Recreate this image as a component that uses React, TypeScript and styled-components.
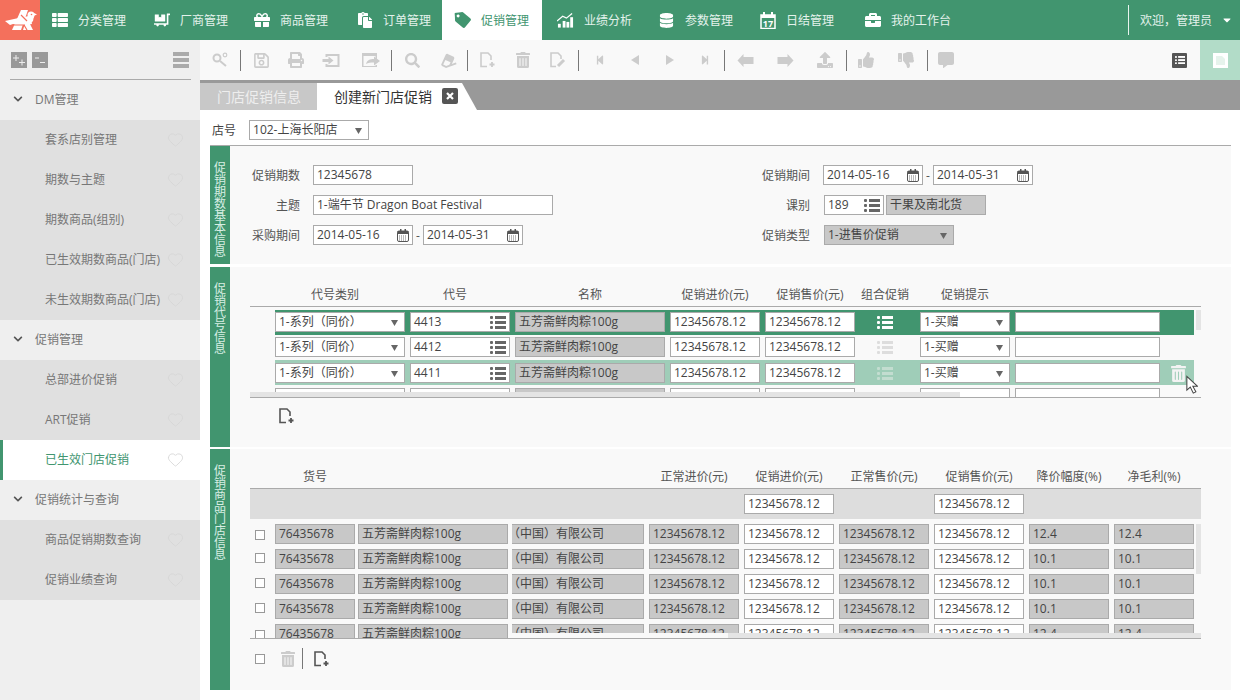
import React from 'react';
import styled, { createGlobalStyle } from 'styled-components';
import { Heart } from 'lucide-react';
import {
  FaThList, FaDollyFlatbed, FaGift, FaPaste, FaTag, FaDatabase, FaBriefcase, FaChevronDown, FaRegSave, FaPrint,
  FaSearch, FaEraser, FaTrashAlt, FaStepBackward, FaStepForward, FaCaretDown, FaUpload, FaThumbsUp,
  FaThumbsDown, FaCommentAlt,
} from 'react-icons/fa';

const Global = createGlobalStyle`
  html, body { margin: 0; padding: 0; background: #fff; }
  body { font-family: "Open Sans", "Noto Sans CJK SC", sans-serif; font-size: 12px; color: #555; overflow: hidden; }
  * { box-sizing: border-box; }
`;

const Page = styled.div`width: 1240px; height: 700px; display: flex; flex-direction: column; overflow: hidden;`;
const Header = styled.header`height: 40px; background: #41956f; display: flex; align-items: stretch; flex: none;`;
const Logo = styled.div`width: 40px; background: #f4705c; flex: none; display: flex;`;
const Nav = styled.nav`display: flex; flex: 1; padding-left: 11px;`;
const NavItem = styled.div<{ $w: number; $pl?: number; $active?: boolean }>`
  width: ${p => p.$w}px; display: flex; align-items: center; gap: 10px; padding-left: ${p => p.$pl ?? 0}px; flex: none;
  background: ${p => p.$active ? '#fff' : 'transparent'};
  color: ${p => p.$active ? '#41956f' : '#e4f2ec'};
`;
const NavIcon = styled.span<{ $active?: boolean }>`width: 17px; display: flex; justify-content: center; flex: none; color: ${p => p.$active ? '#41956f' : '#fff'};`;
const User = styled.div`width: 112px; margin: 5px 0; border-left: 1px solid #e8f4ee; display: flex; align-items: center; padding-left: 11px; gap: 9px; color: #e4f2ec; flex: none;`;

const Body = styled.div`flex: 1; display: flex; min-height: 0;`;
const Side = styled.aside`width: 200px; flex: none; background: #efefef;`;
const SideTop = styled.div`height: 40px; margin: 0 9px 0 10px; border-bottom: 1px solid #aaa; display: flex; align-items: center; justify-content: space-between; padding: 0 2px 0 1px;`;
const SideBtns = styled.div`display: flex; gap: 5px;`;
const SideBtn = styled.span`width: 16px; height: 16px; background: #999; display: flex;`;
const Burger = styled.div`width: 16px; height: 16px; display: flex; flex-direction: column; justify-content: space-between; i { height: 4px; background: #aaa; display: block; }`;
const Group = styled.div`height: 40px; display: flex; align-items: center; padding: 0 0 2px 13px; gap: 12px; color: #777; svg { color: #555; }`;
const Item = styled.div<{ $active?: boolean }>`
  height: 40px; display: flex; align-items: center; justify-content: space-between; padding: 0 16px 2px ${p => p.$active ? 42 : 45}px;
  background: ${p => p.$active ? '#fff' : '#e0e0e0'}; color: ${p => p.$active ? '#41956f' : '#777'};
  border-left: ${p => p.$active ? '3px solid #41956f' : 'none'};
  svg { color: #d6d6d6; flex: none; }
`;
const Main = styled.main`flex: 1; display: flex; flex-direction: column; min-width: 0;`;
const Toolbar = styled.div`height: 40px; background: #f9f9f9; display: flex; align-items: center; color: #ccc; flex: none;`;
const Tool = styled.span<{ $w?: number; $ml?: number }>`width: ${p => p.$w ?? 35}px; margin-left: ${p => p.$ml ?? 0}px; display: flex; justify-content: center; align-items: center; flex: none;`;
const Sep = styled.span<{ $ml?: number }>`width: 1px; height: 21px; background: #777; flex: none; margin-left: ${p => p.$ml ?? 0}px;`;
const Spacer = styled.div`flex: 1;`;
const DarkSquare = styled.span`width: 15px; height: 15px; background: #555; border-radius: 1px; display: flex; align-items: center; justify-content: center; margin-right: 13px;`;
const Panel = styled.div`width: 40px; height: 40px; background: #b2dcc8; display: flex; align-items: center; justify-content: center;`;
const Tabs = styled.div`height: 30px; background: #999; display: flex; align-items: flex-end; flex: none;`;
const TabOff = styled.div`width: 117px; height: 27px; background: #c8c8c8; color: #eee; font-size: 14px; display: flex; align-items: center; padding: 0 0 2px 17px;`;
const TabOn = styled.div`width: 160px; height: 27px; background: #fff; color: #333; font-size: 14px; display: flex; align-items: center; gap: 10px; padding: 0 0 2px 17px; clip-path: polygon(0 0, 145px 0, 100% 100%, 0 100%);`;
const Close = styled.span`width: 16px; height: 16px; background: #555; border-radius: 2px; display: flex; align-items: center; justify-content: center;`;
const Content = styled.div`flex: 1; padding: 0 9px 0 10px; min-height: 0;`;
const StoreRow = styled.div`height: 36px; border-bottom: 1px solid #aaa; display: flex; align-items: center; gap: 13px; padding: 10px 2px 5px; color: #444;`;
const Section = styled.section<{ $h: number; $mt?: number }>`height: ${p => p.$h}px; margin-top: ${p => p.$mt ?? 0}px; display: flex; background: #f9f9f9;`;
const Strip = styled.div`width: 20px; flex: none; background: #41956f; color: #d8eee4; font-family: "Noto Sans CJK SC", sans-serif; font-size: 12px; line-height: 12px; padding: 15px 4px 0; word-break: break-all;`;
const SecBody = styled.div`flex: 1; min-width: 0; position: relative;`;
const FormGrid = styled.div`display: grid; grid-template-columns: 520px auto; padding-top: 19px; row-gap: 10px; grid-auto-rows: 20px;`;
const FormRow = styled.div`display: flex; align-items: center;`;
const Label = styled.label<{ $w: number }>`width: ${p => p.$w}px; text-align: right; margin-right: 13px; color: #555; flex: none;`;
const Field = styled.div<{ $w: number; $gray?: boolean; $ml?: number; $mr?: number; $open?: boolean }>`
  width: ${p => p.$w}px; height: 20px; flex: none; margin-left: ${p => p.$ml ?? 0}px; margin-right: ${p => p.$mr ?? 0}px;
  border: 1px solid #aaa; border-left: ${p => p.$open ? 'none' : '1px solid #aaa'};
  background: ${p => p.$gray ? '#c8c8c8' : '#fff'}; color: #444;
  display: flex; align-items: center; justify-content: space-between; padding: 0 3px 0 ${p => p.$open ? 0 : 3}px; line-height: 18px; white-space: nowrap; overflow: hidden;
  svg { flex: none; color: #666; }
`;
const Scrolled = styled.span`margin-left: -4px;`;
const Dash = styled.span`width: 10px; text-align: center; color: #555; flex: none;`;
const HeadRow = styled.div<{ $t: number; $l: number }>`display: flex; gap: 5px; height: 18px; margin-top: ${p => p.$t}px; padding-left: ${p => p.$l}px; margin-left: 20px; margin-right: 30px; align-items: center; color: #555;`;
const HeadCell = styled.div<{ $w: number; $pr?: number }>`width: ${p => p.$w}px; flex: none; text-align: center; padding-right: ${p => p.$pr ?? 0}px; white-space: nowrap;`;
const ListBox = styled.div<{ $h: number }>`margin: 0 30px 0 20px; height: ${p => p.$h}px; overflow: hidden; border-bottom: 1px solid #aaa; position: relative;`;
const CodeList = styled(ListBox)`margin-top: 3px; border-top: 1px solid #aaa; padding-top: 3px;`;
const GoodsList = styled(ListBox)`padding-top: 5px;`;
const CodeRow = styled.div<{ $tone?: 'on' | 'hover' }>`
  height: 25px; margin: 0 7px 0 25px; padding-top: 2px; display: flex; gap: 5px; align-items: flex-start;
  background: ${p => p.$tone === 'on' ? '#41956f' : p.$tone === 'hover' ? '#9fcdb8' : 'transparent'};
  &:nth-child(n+3) { padding-top: 3px; }
`;
const GroupIcon = styled.div<{ $c: string }>`width: 50px; height: 20px; flex: none; margin-right: 5px; display: flex; align-items: center; justify-content: center; color: ${p => p.$c};`;
const RowTrash = styled.div`width: 33px; height: 20px; padding-left: 3px; display: flex; align-items: center; justify-content: center; color: #f3f3f3; margin-left: -5px; flex: none;`;
const HThumb = styled.div`position: absolute; left: 0; bottom: 0; width: 710px; height: 5px; background: #e4e4e4;`;
const VThumb = styled.div<{ $t: number; $h: number }>`position: absolute; right: 0; top: ${p => p.$t}px; width: 5px; height: ${p => p.$h}px; background: #e4e4e4;`;
const PaneTrack = styled.div`position: absolute; left: 262px; right: 0; bottom: 0; height: 5px; background: #f9f9f9; padding-left: 216px;`;
const PaneThumb = styled.div`height: 5px; background: #e4e4e4;`;
const CursorMark = styled.span`position: absolute; left: 956px; top: 108px; line-height: 0;`;
const Foot = styled.div<{ $t: number; $l: number }>`display: flex; align-items: center; margin: ${p => p.$t}px 0 0 ${p => p.$l}px; color: #666;`;
const QuickBar = styled.div`margin: 3px 30px 0 20px; height: 31px; border-top: 1px solid #aaa; background: #ddd; display: flex; padding: 5px 0 0 494px; gap: 100px;`;
const GoodsRow = styled.div`height: 25px; display: flex; align-items: flex-start; padding-left: 5px;`;
const Check = styled.span<{ $mt: number }>`width: 10px; height: 10px; border: 1px solid #999; background: #fff; margin-top: ${p => p.$mt}px; margin-right: 10px; flex: none; display: block;`;
const GoodsCells = styled.div`display: flex; gap: 5px;`;
const FootCheck = styled.span`width: 10px; height: 10px; border: 1px solid #999; background: #fff; display: block; flex: none;`;
const FootSep = styled.span`width: 1px; height: 21px; background: #777; margin: 0 11px 0 2px; flex: none;`;
const Tri = styled.svg`margin-right: 3px;`;

const Caret = () => <Tri width="7" height="7" viewBox="0 0 7 7"><path d="M0 1h7L3.500 7z" fill="#666" /></Tri>;
const BirdLogo = () => (
  <svg width="40" height="40" viewBox="0 0 40 40">
    <path d="M21 10h7l-7 20h-9z" fill="#fff" />
    <path d="M5 21l18-4 7-1 2 8-8 1-11-1-3 1z" fill="#fff" />
    <path d="M27 17l-4 13h10l-3-6 3-3 1-5-3-2z" fill="#fff" />
    <circle cx="31" cy="15" r="3.500" fill="#fff" />
    <path d="M33 12.500l4 2-3.500 1.500z" fill="#fff" />
    <path d="M21 15l6 6M14 25h11M24 25l3 5" stroke="#f4705c" strokeWidth="1.200" fill="none" />
    <circle cx="31.500" cy="14.500" r="0.800" fill="#f4705c" />
  </svg>
);
const ListIcon = ({ size = 16, color = 'currentColor' }: { size?: number; color?: string }) => (
  <svg width={size} height={size * 0.8125} viewBox="0 0 16 13" fill={color}>
    <rect x="0" y="0" width="3" height="3" rx="1" /><rect x="5" y="0" width="11" height="3" />
    <rect x="0" y="5" width="3" height="3" rx="1" /><rect x="5" y="5" width="11" height="3" />
    <rect x="0" y="10" width="3" height="3" rx="1" /><rect x="5" y="10" width="11" height="3" />
  </svg>
);
const ChartIcon = () => (
  <svg width="18" height="15" viewBox="0 0 18 15" fill="#fff">
    <rect x="1" y="11" width="3" height="4" /><rect x="6" y="8" width="3" height="7" /><rect x="10" y="9" width="3" height="6" /><rect x="14" y="4" width="3" height="11" />
    <path d="M0 8 L6 3 L10 5 L16 0" stroke="#fff" strokeWidth="1.300" fill="none" />
  </svg>
);
const CalIcon = () => (
  <svg width="16" height="17" viewBox="0 0 16 17">
    <path d="M1 3h14v13.500H1z" fill="none" stroke="#fff" strokeWidth="1.500" />
    <rect x="1" y="3" width="14" height="3" fill="#fff" /><rect x="3" y="0" width="2" height="4" fill="#fff" /><rect x="11" y="0" width="2" height="4" fill="#fff" />
    <text x="8" y="15" fontSize="9" fontWeight="700" fill="#fff" textAnchor="middle" fontFamily="Open Sans">17</text>
  </svg>
);
const SmallCal = () => (
  <svg width="12" height="13" viewBox="0 0 12 13">
    <rect x="0.500" y="2" width="11" height="10.500" rx="1.500" fill="none" stroke="#555" />
    <rect x="0.500" y="2" width="11" height="3" fill="#555" /><rect x="3" y="0" width="1.500" height="3" fill="#555" /><rect x="7.500" y="0" width="1.500" height="3" fill="#555" />
    <path d="M2 7h8M2 9h8M2 11h8" stroke="#777" strokeDasharray="1 1" />
  </svg>
);
const PlusMark = () => (
  <svg width="16" height="16" viewBox="0 0 16 16" stroke="#eee" strokeWidth="1" fill="none"><path d="M2 6h6M5 3v6M8 10.500h6M11 7.500v6" /></svg>
);
const MinusMark = () => (
  <svg width="16" height="16" viewBox="0 0 16 16" stroke="#eee" strokeWidth="1" fill="none"><path d="M3 6h4M8 10.500h5" /></svg>
);
const CloseMark = () => (
  <svg width="8" height="8" viewBox="0 0 8 8" stroke="#fff" strokeWidth="2.200"><path d="M1 1l6 6M7 1l-6 6" /></svg>
);
const FileAdd = ({ c = '#555' }: { c?: string }) => (
  <svg width="16" height="16" viewBox="0 0 16 16" fill="none" stroke={c} strokeWidth="1.600">
    <path d="M7 14.500H1V1h7l3 3v4" /><path d="M12 10v5M9.500 12.500h5" strokeWidth="1.800" />
  </svg>
);
const FileEdit = () => (
  <svg width="16" height="16" viewBox="0 0 16 16" fill="none" stroke="#ccc" strokeWidth="1.600">
    <path d="M6 14.500H1V1h7l3 3v3" /><path d="M8 14l6-6" strokeWidth="3" />
  </svg>
);
const KeySearch = () => (
  <svg width="16" height="16" viewBox="0 0 16 16" fill="none" stroke="#ccc" strokeWidth="2">
    <circle cx="5" cy="6" r="3.500" /><path d="M8 9l6 5" /><circle cx="13" cy="3" r="1.800" strokeWidth="1.200" />
  </svg>
);
const ExportIco = () => (
  <svg width="19" height="15" viewBox="0 0 18 15" fill="#ccc">
    <path d="M3 1h14v13H3v-3h2v1h10V3H5v1H3z" /><path d="M0 6h6V3.500L11 7.500 6 11.500V9H0z" />
  </svg>
);
const ShareIco = () => (
  <svg width="19" height="15" viewBox="0 0 19 15" fill="#ccc">
    <path d="M0 0h15v6h-1.500V3H1.500v10h12v-1H15v2H0z" /><path d="M4 11c1-4 4-5 8-5V3.500L18 8l-6 4.500V9.500c-3 0-6 0-8 1.500z" />
  </svg>
);
const FatArrow = ({ flip }: { flip?: boolean }) => (
  <svg width="17" height="13" viewBox="0 0 16 13" fill="#ccc" style={flip ? { transform: 'scaleX(-1)' } : undefined}>
    <path d="M0 6.500L6 0v3h10v7H6v3z" />
  </svg>
);
const StepTri = ({ flip }: { flip?: boolean }) => (
  <svg width="8" height="10" viewBox="0 0 8 10" fill="#ccc" style={flip ? { transform: 'scaleX(-1)' } : undefined}><path d="M0 5l8-5v10z" /></svg>
);
const Arrow = () => (
  <svg width="12" height="20" viewBox="0 0 14 22">
    <path d="M1 1v16l4-3.500 3.500 7 3-1.500-3.500-6.500h5.500z" fill="#fff" stroke="#444" strokeWidth="1.200" />
  </svg>
);
const PageIco = () => (
  <svg width="15" height="15" viewBox="0 0 15 15"><rect width="15" height="15" fill="#fff" /><path d="M3 3h6l3 3v6H3z" fill="#e6f3ec" /></svg>
);

const nav: { t: string; ic: React.ReactNode; w: number; pl?: number; a?: boolean }[] = [
  { t: '分类管理', ic: <FaThList size={16} />, w: 102 },
  { t: '厂商管理', ic: <FaDollyFlatbed size={16} style={{ transform: 'scaleX(-1)' }} />, w: 100 },
  { t: '商品管理', ic: <FaGift size={16} />, w: 103 },
  { t: '订单管理', ic: <FaPaste size={16} />, w: 86 },
  { t: '促销管理', ic: <FaTag size={16} style={{ transform: 'rotate(-5deg)' }} />, w: 100, pl: 12, a: true },
  { t: '业绩分析', ic: <ChartIcon />, w: 116, pl: 15 },
  { t: '参数管理', ic: <FaDatabase size={15} />, w: 101 },
  { t: '日结管理', ic: <CalIcon />, w: 105 },
  { t: '我的工作台', ic: <FaBriefcase size={16} />, w: 170 },
];

const menu: { g: string; items: string[] }[] = [
  { g: 'DM管理', items: ['套系店别管理', '期数与主题', '期数商品(组别)', '已生效期数商品(门店)', '未生效期数商品(门店)'] },
  { g: '促销管理', items: ['总部进价促销', 'ART促销', '已生效门店促销'] },
  { g: '促销统计与查询', items: ['商品促销期数查询', '促销业绩查询'] },
];

const codeHead: [string, number, number?][] = [
  ['代号类别', 130, 10], ['代号', 100, 10], ['名称', 150], ['促销进价(元)', 90], ['促销售价(元)', 90], ['组合促销', 50], ['', 0], ['促销提示', 90],
];
const codeRows: { code: string; tone?: 'on' | 'hover'; iconColor: string; trash?: boolean }[] = [
  { code: '4413', tone: 'on', iconColor: '#fff' },
  { code: '4412', iconColor: '#ddd' },
  { code: '4411', tone: 'hover', iconColor: '#c3ddd0', trash: true },
];
const goodsHead: [string, number][] = [
  ['货号', 80], ['', 147], ['', 132], ['正常进价(元)', 90], ['促销进价(元)', 90], ['正常售价(元)', 90], ['促销售价(元)', 90], ['降价幅度(%)', 80], ['净毛利(%)', 80],
];
const goods = ['12.4', '10.1', '10.1', '10.1', '12.4'];

export default function App() {
  return (
    <Page>
      <Global />
      <Header>
        <Logo><BirdLogo /></Logo>
        <Nav>
          {nav.map(n => (
            <NavItem key={n.t} $w={n.w} $pl={n.pl} $active={n.a}>
              <NavIcon $active={n.a}>{n.ic}</NavIcon><span>{n.t}</span>
            </NavItem>
          ))}
        </Nav>
        <User>欢迎，管理员<FaCaretDown size={12} color="#fff" /></User>
      </Header>
      <Body>
        <Side>
          <SideTop>
            <SideBtns><SideBtn><PlusMark /></SideBtn><SideBtn><MinusMark /></SideBtn></SideBtns>
            <Burger><i /><i /><i /></Burger>
          </SideTop>
          {menu.map(m => (
            <React.Fragment key={m.g}>
              <Group><FaChevronDown size={10} /><span>{m.g}</span></Group>
              {m.items.map(i => (
                <Item key={i} $active={i === '已生效门店促销'}>
                  <span>{i}</span><Heart size={17} strokeWidth={1.200} />
                </Item>
              ))}
            </React.Fragment>
          ))}
        </Side>
        <Main>
          <Toolbar>
            <Tool $w={40}><KeySearch /></Tool><Sep />
            <Tool $w={40}><FaRegSave size={17} /></Tool><Tool $w={30}><FaPrint size={16} /></Tool><Tool $w={41}><ExportIco /></Tool><Tool $w={39}><ShareIco /></Tool><Sep />
            <Tool $w={40}><FaSearch size={15} /></Tool><Tool $w={31}><FaEraser size={15} style={{ transform: 'rotate(-20deg)' }} /></Tool><Sep $ml={4} />
            <Tool $w={39}><FileAdd c="#ccc" /></Tool><Tool $w={31}><FaTrashAlt size={16} /></Tool><Tool $w={40}><FileEdit /></Tool><Sep />
            <Tool $w={41}><FaStepBackward size={10} /></Tool><Tool $w={29}><StepTri /></Tool><Tool $w={41}><StepTri flip /></Tool><Tool $w={29}><FaStepForward size={10} /></Tool><Sep $ml={5} />
            <Tool $w={41}><FatArrow /></Tool><Tool $w={38}><FatArrow flip /></Tool><Tool $w={42}><FaUpload size={16} /></Tool><Sep />
            <Tool $w={37}><FaThumbsUp size={16} /></Tool><Tool $w={43}><FaThumbsDown size={16} /></Tool><Sep />
            <Tool $w={36}><FaCommentAlt size={16} /></Tool>
            <Spacer />
            <DarkSquare><ListIcon size={10} color="#fff" /></DarkSquare>
            <Panel><PageIco /></Panel>
          </Toolbar>
          <Tabs>
            <TabOff>门店促销信息</TabOff>
            <TabOn>创建新门店促销<Close><CloseMark /></Close></TabOn>
          </Tabs>
          <Content>
            <StoreRow>店号<Field $w={120}>102-上海长阳店<Caret /></Field></StoreRow>
            <Section $h={118}>
              <Strip>促销期数基本信息</Strip>
              <SecBody>
                <FormGrid>
                  <FormRow><Label $w={70}>促销期数</Label><Field $w={100}>12345678</Field></FormRow>
                  <FormRow>
                    <Label $w={60}>促销期间</Label>
                    <Field $w={100}>2014-05-16<SmallCal /></Field><Dash>-</Dash><Field $w={100}>2014-05-31<SmallCal /></Field>
                  </FormRow>
                  <FormRow><Label $w={70}>主题</Label><Field $w={240}>1-端午节 Dragon Boat Festival</Field></FormRow>
                  <FormRow>
                    <Label $w={60}>课别</Label>
                    <Field $w={60} $ml={1} $mr={2}>189<ListIcon /></Field><Field $w={100} $gray>干果及南北货</Field>
                  </FormRow>
                  <FormRow>
                    <Label $w={70}>采购期间</Label>
                    <Field $w={100}>2014-05-16<SmallCal /></Field><Dash>-</Dash><Field $w={100}>2014-05-31<SmallCal /></Field>
                  </FormRow>
                  <FormRow>
                    <Label $w={60}>促销类型</Label>
                    <Field $w={130} $gray $ml={1}>1-进售价促销<Caret /></Field>
                  </FormRow>
                </FormGrid>
              </SecBody>
            </Section>
            <Section $h={180} $mt={3}>
              <Strip>促销代号信息</Strip>
              <SecBody>
                <HeadRow $t={18} $l={25}>
                  {codeHead.map(([t, w, pr], i) => <HeadCell key={i} $w={w} $pr={pr}>{t}</HeadCell>)}
                </HeadRow>
                <CodeList $h={92}>
                  {codeRows.map(r => (
                    <CodeRow key={r.code} $tone={r.tone}>
                      <Field $w={130}>1-系列（同价）<Caret /></Field>
                      <Field $w={100}>{r.code}<ListIcon /></Field>
                      <Field $w={150} $gray>五芳斋鲜肉粽100g</Field>
                      <Field $w={90}>12345678.12</Field>
                      <Field $w={90}>12345678.12</Field>
                      <GroupIcon $c={r.iconColor}><ListIcon /></GroupIcon>
                      <Field $w={90}>1-买赠<Caret /></Field>
                      <Field $w={145} />
                      {r.trash && <RowTrash><FaTrashAlt size={17} /></RowTrash>}
                    </CodeRow>
                  ))}
                  <CodeRow>
                    <Field $w={130} />
                    <Field $w={100} />
                    <Field $w={150} $gray />
                    <Field $w={90} />
                    <Field $w={90} />
                    <GroupIcon $c="#777"><ListIcon /></GroupIcon>
                    <Field $w={90} />
                    <Field $w={145} />
                  </CodeRow>
                  <HThumb />
                  <VThumb $t={3} $h={20} />
                </CodeList>
                <Foot $t={10} $l={49}><FileAdd /></Foot>
                <CursorMark><Arrow /></CursorMark>
              </SecBody>
            </Section>
            <Section $h={241} $mt={2}>
              <Strip>促销商品门店信息</Strip>
              <SecBody>
                <HeadRow $t={18} $l={25}>
                  {goodsHead.map(([t, w], i) => <HeadCell key={i} $w={w}>{t}</HeadCell>)}
                </HeadRow>
                <QuickBar>
                  <Field $w={90}>12345678.12</Field><Field $w={90}>12345678.12</Field>
                </QuickBar>
                <GoodsList $h={120}>
                  {goods.map((g, i) => (
                    <GoodsRow key={i}>
                      <Check $mt={i === 0 || i === 4 ? 6 : 4} />
                      <GoodsCells>
                        <Field $w={80} $gray $mr={-2}>76435678</Field>
                        <Field $w={150} $gray $mr={-1}>五芳斋鲜肉粽100g</Field>
                        <Field $w={132} $gray $open><Scrolled>（中国）有限公司</Scrolled></Field>
                        <Field $w={90} $gray>12345678.12</Field>
                        <Field $w={90}>12345678.12</Field>
                        <Field $w={90} $gray>12345678.12</Field>
                        <Field $w={90}>12345678.12</Field>
                        <Field $w={80} $gray>{g}</Field>
                        <Field $w={80} $gray>{g}</Field>
                      </GoodsCells>
                    </GoodsRow>
                  ))}
                  <PaneTrack><PaneThumb /></PaneTrack>
                  <VThumb $t={5} $h={50} />
                </GoodsList>
                <Foot $t={9} $l={25}>
                  <FootCheck /><Tool $w={24} $ml={11} style={{ color: '#ccc' }}><FaTrashAlt size={16} /></Tool><FootSep /><FileAdd />
                </Foot>
              </SecBody>
            </Section>
          </Content>
        </Main>
      </Body>
    </Page>
  );
}
